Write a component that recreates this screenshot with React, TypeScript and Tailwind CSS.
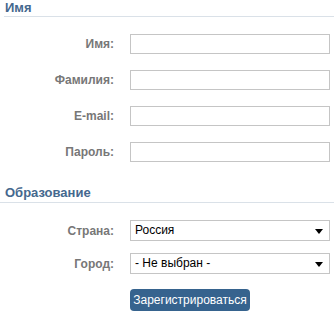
import React from "react";

const Arrow = () => (
    <svg width="8" height="5" viewBox="0 0 8 5" className="absolute right-[6px] top-[8px]">
        <path d="M0 0H8L4 5Z" fill="#000" />
    </svg>
);

function Row({ label, children }: { label: string; children: React.ReactNode }) {
    return (
        <div className="flex items-center">
            <label className="w-[114px] text-right text-[12px] font-bold text-[#777]">{label}</label>
            <div className="ml-[16px]">{children}</div>
        </div>
    );
}

function TextBox() {
    return <input className="block w-[200px] h-[20px] border border-[#c5c5c5] bg-white outline-none" />;
}

function SelectBox({ value }: { value: string }) {
    return (
        <div className="relative w-[200px] h-[21px] border border-[#c5c5c5] bg-white pl-[4px] text-[12px] leading-[19px] text-black">
            {value}
            <Arrow />
        </div>
    );
}

export default function App() {
    return (
        <div className="w-[334px] h-[325px] bg-white font-['Liberation_Sans',Arial,sans-serif]">
            {/* Имя */}
            <h2 className="ml-[4px] pl-[1px] pb-[1px] border-b border-[#dae1e8] text-[13px] leading-[15px] font-bold text-[#45688e]">
                Имя
            </h2>
            <div className="mt-[17px] flex flex-col gap-[16px]">
                <Row label="Имя:"><TextBox /></Row>
                <Row label="Фамилия:"><TextBox /></Row>
                <Row label="E-mail:"><TextBox /></Row>
                <Row label="Пароль:"><TextBox /></Row>
            </div>

            {/* Образование */}
            <h2 className="mt-[23px] pl-[5px] pb-[2px] border-b border-[#dae1e8] text-[13px] leading-[15px] font-bold text-[#45688e]">
                Образование
            </h2>
            <div className="mt-[17px] flex flex-col gap-[12px]">
                <Row label="Страна:"><SelectBox value="Россия" /></Row>
                <Row label="Город:"><SelectBox value="- Не выбран -" /></Row>
            </div>
            <div className="mt-[13px] ml-[130px]">
                <button className="h-[22px] w-[120px] rounded-[4px] bg-[#36638e] text-[12px] text-white">
                    Зарегистрироваться
                </button>
            </div>
        </div>
    );
}
